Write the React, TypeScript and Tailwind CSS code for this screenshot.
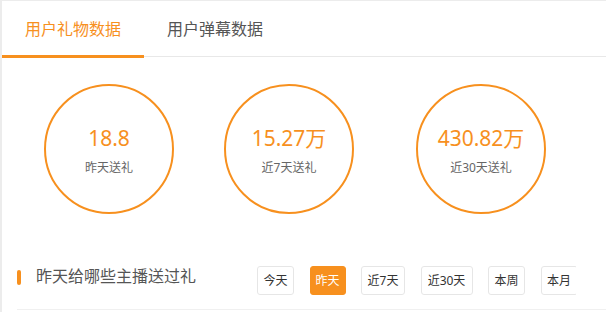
import React from "react";

const STATS = [
  { value: "18.8", label: "昨天送礼", ml: "ml-0" },
  { value: "15.27万", label: "近7天送礼", ml: "ml-[50px]" },
  { value: "430.82万", label: "近30天送礼", ml: "ml-[62px]" },
];

const RANGES = [
  { label: "今天", w: "w-[37px]" },
  { label: "昨天", w: "w-[36px]" },
  { label: "近7天", w: "w-[44px]" },
  { label: "近30天", w: "w-[52px]" },
  { label: "本周", w: "w-[37px]" },
  { label: "本月", w: "w-[37px]" },
];

export default function App() {
  const active = "昨天";

  return (
    <div
      className="w-[606px] h-[312px] overflow-hidden bg-white border-l-2 border-t border-[#ececec]"
      style={{ fontFamily: '"Noto Sans", "Noto Sans CJK SC", sans-serif' }}
    >
      {/* Tabs */}
      <div className="flex h-[56px] border-b border-[#e8e8e8]">
        <div className="relative flex items-center px-[23px] text-[16px] text-[#f7901e]">
          用户礼物数据
          <span className="absolute left-0 right-0 bottom-[-2px] h-[3px] bg-[#f7901e]" />
        </div>
        <div className="flex items-center px-[23px] text-[16px] text-[#555]">
          用户弹幕数据
        </div>
      </div>

      {/* Circles */}
      <div className="flex pl-[42px] pt-[27px]">
        {STATS.map((s) => (
          <div
            key={s.label}
            className={`${s.ml} w-[130px] h-[130px] rounded-full border-2 border-[#f7901e] flex flex-col items-center pt-[40px]`}
          >
            <div className="text-[21px] leading-[24px] text-[#f7901e]">{s.value}</div>
            <div className="mt-[10px] text-[12px] leading-[16px] text-[#666]">{s.label}</div>
          </div>
        ))}
      </div>

      {/* Section header */}
      <div className="flex items-start mt-[52px]">
        <div className="flex items-start w-[255px] pl-[15px]">
          <span className="mt-[4px] w-1 h-[15px] rounded-sm bg-[#f7901e]" />
          <span className="ml-[15px] -mt-[1px] text-[16px] leading-[22px] text-[#555]">
            昨天给哪些主播送过礼
          </span>
        </div>
        <div className="w-[319px] overflow-hidden">
          <div className="flex gap-[15.5px] w-max">
            {RANGES.map((r) => (
              <button
                key={r.label}
                className={
                  r.label === active
                    ? `${r.w} h-[29px] rounded-[3px] border border-[#f7901e] bg-[#f7901e] text-[12px] text-white`
                    : `${r.w} h-[29px] rounded-[3px] border border-[#e6e6e6] bg-white text-[12px] text-[#333]`
                }
              >
                {r.label}
              </button>
            ))}
          </div>
        </div>
      </div>
      <div className="mt-[14px] ml-[15px] h-px bg-[#f0f0f0]" />
    </div>
  );
}
